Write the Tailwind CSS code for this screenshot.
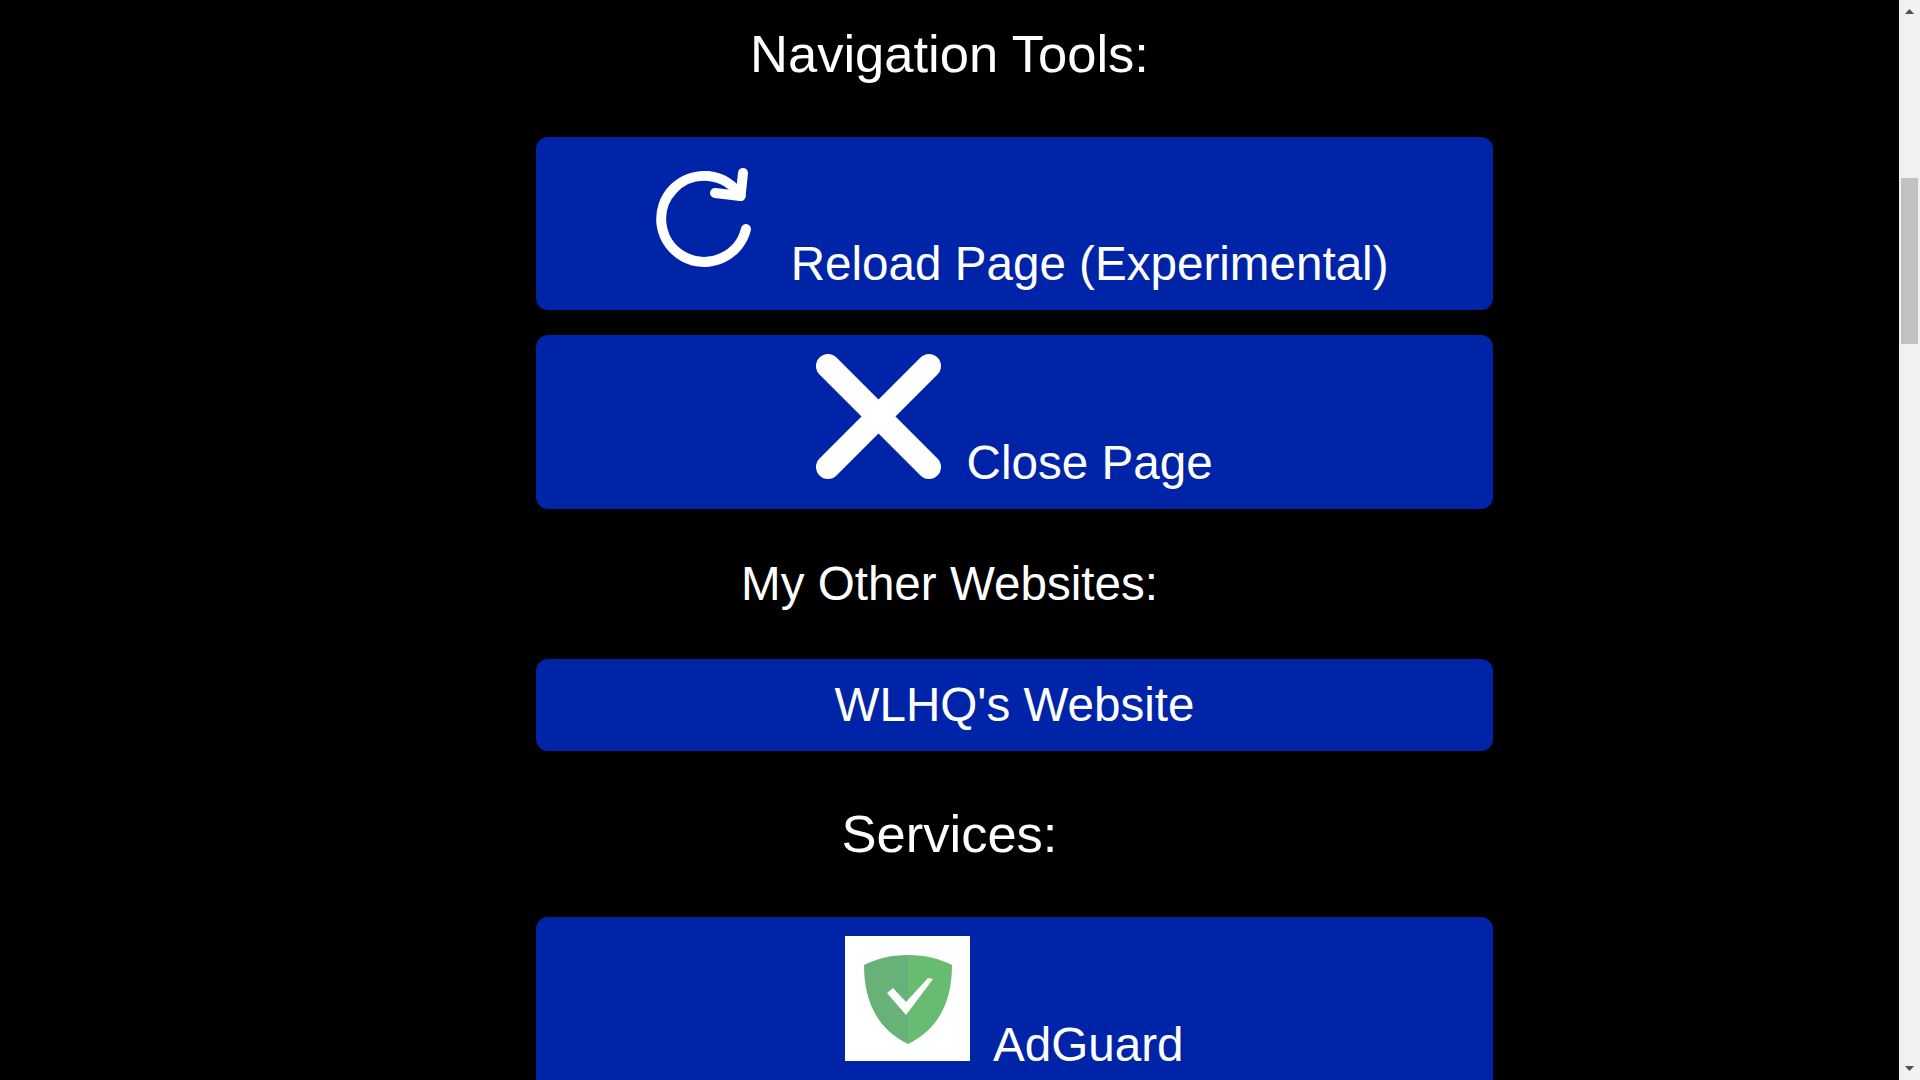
<!DOCTYPE html>
<html lang="en">
<head>
    <meta charset="UTF-8">
    <meta name="viewport" content="width=device-width, initial-scale=1.0">
    <title>Navigation Tools</title>
    <script src="https://cdn.jsdelivr.net/npm/@tailwindcss/browser@4"></script>
</head>
<body class="bg-black text-white font-['Liberation_Sans',Arial,sans-serif] h-screen overflow-hidden flex">
    <main class="flex-1 h-full overflow-hidden">
        <h2 class="text-center text-[52.5px] leading-[60px] pt-6 mb-[53px]">Navigation Tools:</h2>

        <a class="block ml-[536px] w-[957px] bg-[#0024a8] rounded-xl text-center text-[47.6px] leading-[55px] pt-[18px] h-[173px] mb-[25px]">
            <svg class="inline-block align-baseline w-[125px] h-[125px] mr-3" viewBox="0 0 125 125" fill="none" stroke="white" stroke-width="10" stroke-linecap="round" stroke-linejoin="round">
                <path d="M106 74A43 43 0 1 1 100.6 41"/>
                <path d="M103 18L100.6 41L75 38"/>
            </svg>
            Reload Page (Experimental)
        </a>
        <a class="block ml-[536px] w-[957px] bg-[#0024a8] rounded-xl text-center text-[47.6px] leading-[55px] pt-[19px] h-[174px]">
            <svg class="inline-block align-baseline w-[125px] h-[125px] mr-3" viewBox="0 0 125 125" fill="none" stroke="white" stroke-width="24" stroke-linecap="round">
                <path d="M12 12L113 113M113 12L12 113"/>
            </svg>
            Close Page
        </a>

        <h2 class="text-center text-[47.6px] leading-[55px] mt-[47px] mb-[48px]">My Other Websites:</h2>

        <a class="block ml-[536px] w-[957px] bg-[#0024a8] rounded-xl text-center text-[47.6px] leading-[55px] pt-[18px] pb-[19px]">WLHQ's Website</a>

        <h2 class="text-center text-[52.5px] leading-[60px] mt-[53px] mb-[53px]">Services:</h2>

        <a class="block ml-[536px] w-[957px] bg-[#0024a8] rounded-xl text-center text-[47.6px] leading-[55px] pt-[19px] h-[174px]">
            <svg class="inline-block align-baseline w-[125px] h-[125px] mr-3 bg-white" viewBox="0 0 125 125">
                <path fill="#68b279" d="M63 19C45 19 31 23 19 29C19 62 30 92 63 108Z"/>
                <path fill="#68bc71" d="M63 19C81 19 95 23 107 29C107 62 96 92 63 108Z"/>
                <path fill="white" d="M42 57L48 52L61 66L83 42L88 43L61 79Z"/>
            </svg>
            AdGuard
        </a>
    </main>

    <!-- fake scrollbar -->
    <aside class="w-[21px] h-full bg-[#f1f1f1] flex flex-col items-center shrink-0">
        <svg class="w-[9px] h-[5px] mt-[9px]" viewBox="0 0 9 5"><path fill="#505050" d="M4.5 0L9 5H0Z"/></svg>
        <div class="w-[17px] h-[166px] bg-[#c1c1c1] mt-[164px]"></div>
        <svg class="w-[9px] h-[5px] mt-auto mb-[9px]" viewBox="0 0 9 5"><path fill="#505050" d="M0 0H9L4.5 5Z"/></svg>
    </aside>
</body>
</html>
